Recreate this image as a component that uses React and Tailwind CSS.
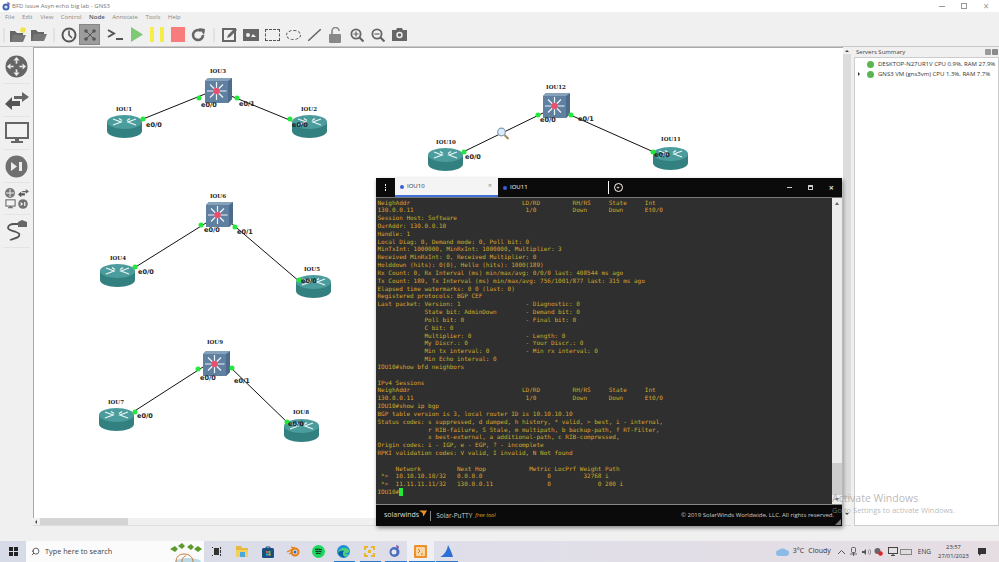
import React from "react";
import { Search } from "lucide-react";

const sans = "font-['Open_Sans','Noto_Sans',sans-serif]";

const termLines = [
  "NeighAddr                               LD/RD         RH/RS     State     Int",
  "130.0.0.11                               1/0          Down      Down      Et0/0",
  "Session Host: Software",
  "OurAddr: 130.0.0.10",
  "Handle: 1",
  "Local Diag: 0, Demand mode: 0, Poll bit: 0",
  "MinTxInt: 1000000, MinRxInt: 1000000, Multiplier: 3",
  "Received MinRxInt: 0, Received Multiplier: 0",
  "Holddown (hits): 0(0), Hello (hits): 1000(189)",
  "Rx Count: 0, Rx Interval (ms) min/max/avg: 0/0/0 last: 408544 ms ago",
  "Tx Count: 189, Tx Interval (ms) min/max/avg: 756/1001/877 last: 315 ms ago",
  "Elapsed time watermarks: 0 0 (last: 0)",
  "Registered protocols: BGP CEF",
  "Last packet: Version: 1                  - Diagnostic: 0",
  "             State bit: AdminDown        - Demand bit: 0",
  "             Poll bit: 0                 - Final bit: 0",
  "             C bit: 0",
  "             Multiplier: 0               - Length: 0",
  "             My Discr.: 0                - Your Discr.: 0",
  "             Min tx interval: 0          - Min rx interval: 0",
  "             Min Echo interval: 0",
  "IOU10#show bfd neighbors",
  " ",
  "IPv4 Sessions",
  "NeighAddr                               LD/RD         RH/RS     State     Int",
  "130.0.0.11                               1/0          Down      Down      Et0/0",
  "IOU10#show ip bgp",
  "BGP table version is 3, local router ID is 10.10.10.10",
  "Status codes: s suppressed, d damped, h history, * valid, > best, i - internal,",
  "              r RIB-failure, S Stale, m multipath, b backup-path, f RT-Filter,",
  "              x best-external, a additional-path, c RIB-compressed,",
  "Origin codes: i - IGP, e - EGP, ? - incomplete",
  "RPKI validation codes: V valid, I invalid, N Not found",
  " ",
  "     Network          Next Hop            Metric LocPrf Weight Path",
  " *>  10.10.10.10/32   0.0.0.0                  0         32768 i",
  " *>  11.11.11.11/32   130.0.0.11               0             0 200 i",
];

const routers = [
  { name: "IOU1", x: 107, y: 114, lx: 124, ly: 105 },
  { name: "IOU2", x: 292, y: 114, lx: 309, ly: 105 },
  { name: "IOU4", x: 100, y: 263, lx: 118, ly: 254 },
  { name: "IOU5", x: 296, y: 274, lx: 312, ly: 265 },
  { name: "IOU7", x: 99, y: 407, lx: 116, ly: 398 },
  { name: "IOU8", x: 284, y: 418, lx: 301, ly: 408 },
  { name: "IOU10", x: 428, y: 147, lx: 446, ly: 138 },
  { name: "IOU11", x: 653, y: 146, lx: 671, ly: 135 },
];

const switches = [
  { name: "IOU3", x: 205, y: 77, lx: 218, ly: 67 },
  { name: "IOU6", x: 206, y: 201, lx: 218, ly: 192 },
  { name: "IOU9", x: 203, y: 350, lx: 215, ly: 338 },
  { name: "IOU12", x: 543, y: 92, lx: 556, ly: 83 },
];

// x1,y1 x2,y2 are the line, dots sit near the ends
const links = [
  [143, 118, 205, 93, 143, 118, 199, 97],
  [231, 95, 292, 120, 237, 97, 290, 118],
  [206, 222, 134, 267, 201, 224, 135, 266],
  [231, 222, 300, 281, 235, 226, 299, 279],
  [203, 366, 133, 411, 198, 368, 135, 411],
  [228, 364, 289, 423, 232, 367, 287, 421],
  [543, 112, 463, 151, 538, 114, 464, 151],
  [566, 112, 656, 152, 571, 114, 653, 151],
];

const ifLabels = [
  { t: "e0/0", x: 146, y: 120 },
  { t: "e0/0", x: 201, y: 100 },
  { t: "e0/1", x: 239, y: 99 },
  { t: "e0/0", x: 292, y: 120 },
  { t: "e0/0", x: 204, y: 225 },
  { t: "e0/1", x: 237, y: 227 },
  { t: "e0/0", x: 138, y: 267 },
  { t: "e0/0", x: 301, y: 276 },
  { t: "e0/0", x: 200, y: 373 },
  { t: "e0/1", x: 234, y: 376 },
  { t: "e0/0", x: 137, y: 411 },
  { t: "e0/0", x: 288, y: 419 },
  { t: "e0/0", x: 540, y: 115 },
  { t: "e0/1", x: 578, y: 114 },
  { t: "e0/0", x: 465, y: 152 },
  { t: "e0/0", x: 654, y: 150 },
];

const Router = () => (
  <svg width="35" height="23" viewBox="0 0 35 23">
    <path d="M0 7v9c0 4 8 7 17.5 7S35 20 35 16V7z" fill="#32807f" />
    <ellipse cx="17.5" cy="7" rx="17.5" ry="7" fill="#4b9c9c" />
    <path d="M6 4l8 3-8 3M29 4l-8 3 8 3M12 3.5l3 2M23 3.5l-3 2" stroke="#e8f4f4" strokeWidth="1.3" fill="none" />
  </svg>
);

const Switch = () => (
  <svg width="27" height="25" viewBox="0 0 27 25">
    <path d="M0 3L3 0h24v21l-4 4H0z" fill="#5f80a0" />
    <path d="M23 3L27 0v21l-4 4z" fill="#4d6c8b" />
    <path d="M0 3L3 0h24l-4 3z" fill="#86a2bb" />
    <path d="M11.500 13H2M11.500 13h10M11.500 13V4M11.500 13v9M11.500 13L5 6.500M11.500 13l6.500-6.500M11.500 13L5 19.500M11.500 13l6.500 6.500" stroke="#eef4f8" strokeWidth="1.200" />
    <circle cx="11.500" cy="13" r="3.300" fill="#e8506e" />
  </svg>
);

const Canvas = () => (
  <div className="relative flex-1 bg-white border-l border-t border-[#a8a8a8] overflow-hidden">
    <svg className="absolute left-[-34px] top-[-47px]" width="999" height="562">
      {links.map((l, i) => (
        <line key={i} x1={l[0]} y1={l[1]} x2={l[2]} y2={l[3]} stroke="#111" strokeWidth="1" />
      ))}
    </svg>
    {routers.map((r) => (
      <div key={r.name} className="absolute" style={{ left: r.x - 34, top: r.y - 47 }}>
        <Router />
      </div>
    ))}
    {switches.map((r) => (
      <div key={r.name} className="absolute" style={{ left: r.x - 34, top: r.y - 47 }}>
        <Switch />
      </div>
    ))}
    <svg className="absolute left-[-34px] top-[-47px]" width="999" height="562">
      {links.map((l, i) => (
        <g key={i}>
          <circle cx={l[4]} cy={l[5]} r="2.500" fill="#22e83a" />
          <circle cx={l[6]} cy={l[7]} r="2.500" fill="#22e83a" />
        </g>
      ))}
      {/* magnifier cursor */}
      <circle cx="501.500" cy="131" r="3.800" fill="#dcecf8" stroke="#7d9ab8" strokeWidth="1.200" />
      <path d="M504.500 134l4 4" stroke="#a08a5a" strokeWidth="2" />
    </svg>
    {[...routers, ...switches].map((r) => (
      <span
        key={r.name}
        className="absolute -translate-x-1/2 font-['DejaVu_Serif',serif] font-bold text-[5.5px] leading-[7px] text-[#222] whitespace-pre"
        style={{ left: r.lx - 34, top: r.ly - 47 }}
      >
        {r.name}
      </span>
    ))}
    {ifLabels.map((l, i) => (
      <span
        key={i}
        className="absolute font-['DejaVu_Sans',sans-serif] font-bold text-[6.500px] leading-[8px] text-[#222] whitespace-pre"
        style={{ left: l.x - 34, top: l.y - 47 }}
      >
        {l.t}
      </span>
    ))}
  </div>
);

const Grip = () => <div className="w-[2px] h-[14px] bg-[#e2e2e2]" />;

const ToolIcons = () => (
  <div className="flex items-center h-full">
    <div className="ml-[3px] mr-[4px]">
      <Grip />
    </div>
    {/* new project */}
    <svg width="18" height="16" viewBox="0 0 18 16">
      <path d="M1 4h5l2 2h6v2H5L3 15H1z" fill="#666" />
      <path d="M4 8h13l-3 7H2z" fill="#777" />
      <circle cx="14" cy="3" r="2.800" fill="#f3e24b" />
    </svg>
    {/* open */}
    <svg className="ml-[4px]" width="16" height="14" viewBox="0 0 16 14">
      <path d="M0 2h5l2 2h6v2H4L2 13H0z" fill="#666" />
      <path d="M3 6h13l-3 7H1z" fill="#777" />
    </svg>
    <div className="w-[14px] flex justify-center">
      <Grip />
    </div>
    {/* clock */}
    <svg width="16" height="16" viewBox="0 0 16 16">
      <circle cx="8" cy="8" r="6.500" fill="none" stroke="#555" strokeWidth="2" />
      <path d="M8 3.500V8l3 3" fill="none" stroke="#555" strokeWidth="1.600" />
    </svg>
    {/* selected device names */}
    <div className="ml-[2px] w-[21px] h-[21px] bg-[#9c9c9c] border border-[#888] flex items-center justify-center">
      <svg width="14" height="14" viewBox="0 0 14 14">
        <path d="M3 3l8 8M11 3l-8 8" stroke="#555" strokeWidth="1" />
        <circle cx="3" cy="3" r="1.800" fill="#555" />
        <circle cx="11" cy="3" r="1.800" fill="#555" />
        <circle cx="3" cy="11" r="1.800" fill="#555" />
        <circle cx="11" cy="11" r="1.800" fill="#555" />
      </svg>
    </div>
    {/* console */}
    <svg className="ml-[7px]" width="16" height="12" viewBox="0 0 16 12">
      <path d="M1 1l6 3.500L1 8" fill="none" stroke="#555" strokeWidth="2" />
      <path d="M9 10h7" stroke="#555" strokeWidth="2" />
    </svg>
    {/* play */}
    <svg className="ml-[8px]" width="12" height="15" viewBox="0 0 12 15">
      <path d="M0 0l12 7.500L0 15z" fill="#7fc876" />
    </svg>
    {/* pause */}
    <div className="ml-[7px] flex gap-[6px] h-[15px]">
      <div className="w-[4px] bg-[#f5ee4a]" />
      <div className="w-[4px] bg-[#f5ee4a]" />
    </div>
    {/* stop */}
    <div className="ml-[7px] w-[14px] h-[15px] bg-[#f97c7c]" />
    {/* reload */}
    <svg className="ml-[5px]" width="16" height="16" viewBox="0 0 16 16">
      <path d="M13 8a5 5 0 1 1-2-4" fill="none" stroke="#666" strokeWidth="2.600" />
      <path d="M9 1l6 1-1 6z" fill="#666" />
    </svg>
    <div className="w-[16px] flex justify-center">
      <Grip />
    </div>
    {/* note */}
    <svg width="16" height="15" viewBox="0 0 16 15">
      <rect x="0" y="1" width="14" height="14" fill="#666" />
      <rect x="2" y="3" width="10" height="10" fill="#f0f0f0" />
      <path d="M5 11l1-3 7-7 2 2-7 7z" fill="#666" />
    </svg>
    {/* image */}
    <svg className="ml-[5px]" width="16" height="12" viewBox="0 0 16 12">
      <rect width="16" height="12" fill="#666" />
      <circle cx="5" cy="6" r="2" fill="#f0f0f0" />
      <path d="M8 8l2-3 3 3z" fill="#f0f0f0" />
    </svg>
    {/* rectangle */}
    <div className="ml-[6px] w-[15px] h-[12px] border-[1.500px] border-dashed border-[#555]" />
    {/* ellipse */}
    <div className="ml-[6px] w-[15px] h-[10px] rounded-[50%] border border-dashed border-[#555]" />
    {/* line */}
    <svg className="ml-[7px]" width="13" height="12" viewBox="0 0 13 12">
      <path d="M0 12L13 0" stroke="#666" strokeWidth="1.500" />
    </svg>
    {/* lock */}
    <svg className="ml-[8px]" width="14" height="16" viewBox="0 0 14 16">
      <path d="M3 7V4a3.500 3.500 0 0 1 7 0" fill="none" stroke="#888" strokeWidth="1.600" />
      <rect x="0" y="7" width="12" height="9" rx="1" fill="#888" />
    </svg>
    {/* zoom in */}
    <svg className="ml-[7px]" width="14" height="14" viewBox="0 0 14 14">
      <circle cx="6" cy="6" r="4.600" fill="none" stroke="#666" strokeWidth="1.800" />
      <path d="M9.500 9.500L13.500 13.500" stroke="#666" strokeWidth="2.200" />
      <path d="M3.500 6h5M6 3.500v5" stroke="#666" strokeWidth="1.200" />
    </svg>
    {/* zoom out */}
    <svg className="ml-[7px]" width="14" height="14" viewBox="0 0 14 14">
      <circle cx="6" cy="6" r="4.600" fill="none" stroke="#666" strokeWidth="1.800" />
      <path d="M9.500 9.500L13.500 13.500" stroke="#666" strokeWidth="2.200" />
      <path d="M3.500 6h5" stroke="#666" strokeWidth="1.200" />
    </svg>
    {/* camera */}
    <svg className="ml-[7px]" width="15" height="13" viewBox="0 0 15 13">
      <path d="M0 2h4l1-2h5l1 2h4v11H0z" fill="#666" />
      <circle cx="7.500" cy="7" r="3.200" fill="#f0f0f0" />
      <circle cx="7.500" cy="7" r="1.800" fill="#666" />
    </svg>
  </div>
);

const Dock = () => (
  <div className="w-[33px] flex flex-col items-center shrink-0">
    <div className="h-[37px] pt-[3px] w-[27px] flex items-center justify-center border-b border-[#e4e4e4]">
      <svg width="23" height="23" viewBox="0 0 23 23">
        <circle cx="11.500" cy="11.500" r="11" fill="#666" />
        <path d="M11.500 2l3 3.500h-6zM11.500 21l3-3.500h-6zM2 11.500l3.500-3v6zM21 11.500l-3.500-3v6z" fill="#eee" />
        <path d="M10.700 5.500h1.600v12h-1.600zM5.500 10.700h12v1.600h-12z" fill="#eee" />
        <circle cx="11.500" cy="11.500" r="3" fill="#666" />
      </svg>
    </div>
    <div className="h-[33px] w-[27px] flex items-center justify-center border-b border-[#e4e4e4]">
      <svg width="24" height="19" viewBox="0 0 24 19">
        <path d="M9 5h8V1l7 5-7 5V8H9z" fill="#666" />
        <path d="M15 10H7V6L0 13l7 6v-4h8z" fill="#555" />
      </svg>
    </div>
    <div className="h-[33px] w-[27px] flex items-center justify-center border-b border-[#e4e4e4]">
      <svg width="24" height="24" viewBox="0 0 24 24">
        <rect x="1" y="2" width="22" height="15" fill="#f3f3f3" stroke="#666" strokeWidth="2" />
        <path d="M10 17h4v3h4v2H6v-2h4z" fill="#666" />
      </svg>
    </div>
    <div className="h-[33px] w-[27px] flex items-center justify-center border-b border-[#e4e4e4]">
      <svg width="23" height="23" viewBox="0 0 23 23">
        <circle cx="11.500" cy="11.500" r="11" fill="#707070" />
        <path d="M6 7l6 4.500L6 16z" fill="#eee" />
        <rect x="14" y="7" width="3" height="9" fill="#eee" />
      </svg>
    </div>
    <div className="h-[32px] w-[27px] flex items-center justify-center border-b border-[#e4e4e4]">
      <div className="grid grid-cols-2 gap-x-[2px] gap-y-[1px]">
        <svg width="10" height="10" viewBox="0 0 10 10">
          <circle cx="5" cy="5" r="5" fill="#777" />
          <path d="M5 1v8M1 5h8" stroke="#eee" strokeWidth="1" />
        </svg>
        <svg width="11" height="10" viewBox="0 0 24 19">
          <path d="M9 5h8V1l7 5-7 5V8H9z" fill="#666" />
          <path d="M15 10H7V6L0 13l7 6v-4h8z" fill="#555" />
        </svg>
        <svg width="11" height="10" viewBox="0 0 24 24">
          <rect x="1" y="2" width="22" height="15" fill="#f3f3f3" stroke="#666" strokeWidth="2.500" />
          <path d="M10 17h4v3h4v2H6v-2h4z" fill="#666" />
        </svg>
        <svg width="10" height="10" viewBox="0 0 23 23">
          <circle cx="11.500" cy="11.500" r="11" fill="#707070" />
          <path d="M6 7l6 4.500L6 16z" fill="#eee" />
          <rect x="14" y="7" width="3" height="9" fill="#eee" />
        </svg>
      </div>
    </div>
    <div className="h-[33px] w-[27px] flex items-center justify-center border-b border-[#e4e4e4]">
      <svg width="23" height="22" viewBox="0 0 23 22">
        <path d="M15 4H9C5 4 3 6 3 8s5 3 8 4 4 2 3 4-6 3-9 4" fill="none" stroke="#555" strokeWidth="1.800" />
        <path d="M13 2l4-2 5 2v5h-9z" fill="#666" />
      </svg>
    </div>
  </div>
);

const Terminal = () => (
  <div className="absolute left-[376px] top-[178px] w-[466px] h-[348px] flex flex-col bg-black shadow-[1px_2px_4px_rgba(0,0,0,0.45)]">
    {/* tabs */}
    <div className="h-[19px] flex items-stretch bg-[#0b0b0b] text-[6px] shrink-0">
      <div className="w-[19px] flex flex-col items-center justify-center gap-[1px]">
        <div className="w-[1.500px] h-[1.500px] bg-white" />
        <div className="w-[1.500px] h-[1.500px] bg-white" />
        <div className="w-[1.500px] h-[1.500px] bg-white" />
      </div>
      <div className={`w-[103px] bg-[#f4f4f4] border-b-2 border-[#3f6fd8] flex items-center pl-[5px] text-[#333] ${sans}`}>
        <div className="w-[4px] h-[4px] rounded-full bg-[#3a5fd8] mr-[3px]" />
        IOU10
        <span className="ml-auto mr-[6px] text-[#888] text-[7px]">×</span>
      </div>
      <div className={`flex items-center pl-[5px] text-white ${sans}`}>
        <div className="w-[4px] h-[4px] rounded-full bg-[#3a5fd8] mr-[3px]" />
        IOU11
      </div>
      <div className="ml-[80px] my-[3px] w-px bg-white" />
      <div className="ml-[5px] self-center w-[9px] h-[9px] rounded-full border border-white flex items-center justify-center text-white text-[6px] leading-none">
        +
      </div>
      <div className="ml-auto flex items-center gap-[16px] mr-[8px]">
        <div className="w-[5px] h-[1.500px] bg-[#ccc]" />
        <div className="w-[5px] h-[5px] border border-[#ccc] border-t-2" />
        <span className="text-[#ddd] text-[9px] leading-none font-bold">×</span>
      </div>
    </div>
    {/* screen */}
    <div className="flex-1 flex border-t border-[#777] bg-[#2f2f2f] min-h-0">
      <div className="flex-1 overflow-hidden pl-[1.500px] pt-[0.500px] font-['DejaVu_Sans_Mono',monospace] text-[6px] leading-[7.830px] text-[#d4a72c] whitespace-pre">
        {termLines.map((l, i) => (
          <div key={i} className="h-[7.830px]">
            {l}
          </div>
        ))}
        <div className="h-[7.830px]">
          IOU10#
          <span className="inline-block w-[3.500px] h-[7.500px] align-top bg-[#22e83a]" />
        </div>
      </div>
      {/* scrollbar */}
      <div className="w-[10px] bg-[#ececec] flex flex-col items-center shrink-0">
        <div className="mt-[4px] w-0 h-0 border-x-[2.500px] border-x-transparent border-b-[3px] border-b-[#666]" />
        <div className="mt-auto w-full h-[32px] bg-[#cdcdcd]" />
        <div className="my-[3px] w-0 h-0 border-x-[2.500px] border-x-transparent border-t-[3px] border-t-[#666]" />
      </div>
    </div>
    {/* footer */}
    <div className="relative h-[22px] bg-[#0a0a0a] border-t border-[#888] flex items-center shrink-0 text-[6.500px]">
      <span className={`ml-[8px] text-[#ddd] text-[7px] ${sans}`}>solarwinds</span>
      <svg className="mb-[5px]" width="8" height="7" viewBox="0 0 9 7">
        <path d="M0 0h9L5 7 4 3z" fill="#f0932b" />
      </svg>
      <div className="ml-[3px] w-px h-[10px] bg-[#888]" />
      <span className={`ml-[5px] text-[#ccc] ${sans}`}>Solar-PuTTY</span>
      <span className={`ml-[3px] italic text-[#e0a020] text-[5.500px] ${sans}`}>free tool</span>
      <span className={`ml-auto mr-[8px] text-[#ccc] text-[6px] ${sans}`}>
        © 2019 SolarWinds Worldwide, LLC. All rights reserved.
      </span>
      <svg className="absolute right-[1px] bottom-[1px]" width="6" height="6" viewBox="0 0 6 6">
        <path d="M6 0v6H0z" fill="#777" />
      </svg>
    </div>
  </div>
);

const Taskbar = () => (
  <div className="h-[21px] shrink-0 flex items-center bg-gradient-to-r from-[#d6dbe7] via-[#e0dfe9] to-[#e6dde3]">
    <div className="w-[26px] flex justify-center">
      <svg width="9" height="9" viewBox="0 0 9 9">
        <path d="M0 0h4v4H0zM5 0h4v4H5zM0 5h4v4H0zM5 5h4v4H5z" fill="#222" />
      </svg>
    </div>
    <div className="relative w-[178px] h-full bg-[#fbfbfb] flex items-center overflow-hidden">
      <Search size={9} className="ml-[5px] text-[#333] -scale-x-100" />
      <span className={`ml-[5px] text-[7.300px] text-[#444] ${sans}`}>Type here to search</span>
      <svg className="absolute right-0 bottom-0" width="40" height="21" viewBox="0 0 40 21">
        <ellipse cx="24" cy="21" rx="13" ry="4" fill="#bcd9e6" />
        <path d="M12 21c0-5 3-8 8-8s9 3 9 8M18 21c0-4 2-6 4-6" fill="none" stroke="#c97a3a" strokeWidth="1" />
        <path d="M6 8l5-3 3 3-3 3zM14 5l4-3 3 3-3 3zM23 6l4-3 3 3-3 3zM30 8l4-3 4 3-4 3z" fill="#5c9a2e" />
      </svg>
    </div>
    <div className="relative flex items-center h-full">
      <div className="w-[25px] flex justify-center">
        <svg width="9" height="9" viewBox="0 0 9 9">
          <path d="M0 0h1v1H0zM0 8h1v1H0zM2 1h5v7H2z M8 0h1v2H8zM8 3h1v3H8zM8 7h1v2H8z" fill="#333" />
        </svg>
      </div>
      <div className="w-[26px] flex justify-center">
        <svg width="12" height="11" viewBox="0 0 12 11">
          <path d="M0 0h5l1 2h6v2H0z" fill="#e8b93c" />
          <path d="M0 4h12v7H0z" fill="#f4cf5a" />
          <path d="M4 6h5v5H4z" fill="#4aa8e0" />
        </svg>
      </div>
      <div className="w-[26px] flex justify-center">
        <svg width="12" height="12" viewBox="0 0 12 12">
          <rect x="0" y="2" width="12" height="10" rx="1.500" fill="#1a4f80" />
          <path d="M4 3V1h4v2" fill="none" stroke="#1a4f80" />
          <path d="M4 5h2v2H4z" fill="#e8553a" />
          <path d="M6.500 5h2v2h-2z" fill="#6cbd45" />
          <path d="M4 7.500h2v2H4z" fill="#2aa4e8" />
          <path d="M6.500 7.500h2v2h-2z" fill="#f4c030" />
        </svg>
      </div>
      <div className="w-[25px] flex justify-center">
        <svg width="13" height="11" viewBox="0 0 13 11">
          <circle cx="8" cy="6" r="3.500" fill="none" stroke="#e87d0d" strokeWidth="2" />
          <circle cx="8" cy="6" r="1.500" fill="#2a6fb0" />
          <path d="M0 6l6-3M2 8l4-2M4 1l4 1" stroke="#e87d0d" strokeWidth="1.200" />
        </svg>
      </div>
      <div className="w-[25px] flex justify-center">
        <svg width="13" height="13" viewBox="0 0 13 13">
          <circle cx="6.500" cy="6.500" r="6.500" fill="#1ed760" />
          <path d="M3 4.500c2-.6 5-.5 7 .6M3.500 6.500c2-.5 4-.4 6 .5M4 8.500c1.500-.4 3-.3 4.500.4" stroke="#111" strokeWidth="1" fill="none" />
        </svg>
      </div>
      <div className="w-[25px] flex justify-center">
        <svg width="13" height="13" viewBox="0 0 13 13">
          <circle cx="6.500" cy="6.500" r="6.500" fill="#1b8fd6" />
          <path d="M1 8c1-5 7-7 11-3 1 3-2 3-4 3 0 1 2 2 4 1-2 4-8 4-11-1z" fill="#4ed07e" />
          <path d="M1 8c1 3 5 5 8 4-3 0-4-4-2-6-2-1-5 0-6 2z" fill="#0d5fa8" />
        </svg>
      </div>
      <div className="w-[26px] flex justify-center">
        <svg width="13" height="13" viewBox="0 0 13 13">
          <path d="M1 1h4v2H3v2H1zM8 1h4v4h-2V3H8zM1 8h2v2h2v2H1zM8 12v-2h2V8h2v4zM5 5h3v3H5z" fill="#eeb42c" />
        </svg>
      </div>
      <div className="w-[25px] flex justify-center">
        <svg width="11" height="13" viewBox="0 0 11 13">
          <circle cx="5.500" cy="7" r="5" fill="#4a6dc0" />
          <circle cx="5" cy="7" r="2.500" fill="#e8e8ef" />
          <path d="M7 0c2 0 3 1 3 3L8 4z" fill="#8a5fb0" />
        </svg>
      </div>
      <div className="w-[27px] h-full bg-[#eef0f6] flex justify-center items-center">
        <svg width="13" height="13" viewBox="0 0 13 13">
          <rect width="13" height="13" rx="1" fill="#f0902a" />
          <rect x="2" y="2" width="9" height="9" rx="1" fill="#f7d6a8" />
          <path d="M4 4l2 2-2 2M7 9h2" stroke="#e07818" fill="none" />
        </svg>
      </div>
      <div className="w-[25px] flex justify-center">
        <svg width="13" height="13" viewBox="0 0 13 13">
          <path d="M0 12C4 10 7 6 8 0c2 4 4 8 5 12z" fill="#2b70d6" />
        </svg>
      </div>
      {/* running-app underlines */}
      <div className="absolute left-[130px] bottom-0 w-[21px] h-[1.500px] bg-[#2a78c8]" />
      <div className="absolute left-[156px] bottom-0 w-[21px] h-[1.500px] bg-[#2a78c8]" />
      <div className="absolute left-[181px] bottom-0 w-[22px] h-[1.500px] bg-[#2a78c8]" />
      <div className="absolute left-[205px] bottom-0 w-[26px] h-[1.500px] bg-[#2a78c8]" />
      <div className="absolute left-[232px] bottom-0 w-[22px] h-[1.500px] bg-[#2a78c8]" />
    </div>
    <div className={`ml-auto flex items-center text-[#333] ${sans}`}>
      <svg width="13" height="8" viewBox="0 0 13 8">
        <path d="M3 8a3 3 0 0 1 0-6c1-2 6-2 7 0a3 3 0 0 1 0 6z" fill="#8cbbe8" />
      </svg>
      <span className="ml-[4px] text-[7px]">3°C</span>
      <span className="ml-[4px] text-[7px]">Cloudy</span>
      <svg className="ml-[7.500px]" width="7" height="4" viewBox="0 0 7 4">
        <path d="M0 4l3.500-3.500L7 4" fill="none" stroke="#333" strokeWidth="0.800" />
      </svg>
      <svg className="ml-[5px]" width="7" height="9" viewBox="0 0 7 9">
        <rect x="1.500" y="0.500" width="4" height="5" rx="1" fill="none" stroke="#444" strokeWidth="0.800" />
        <path d="M0 7h7M3.500 5.500V9" stroke="#444" strokeWidth="0.800" />
      </svg>
      <svg className="ml-[5px]" width="9" height="8" viewBox="0 0 9 8">
        <path d="M0 3h2l2-2v6L2 5H0z" fill="#555" />
        <path d="M6 2c1 1 1 3 0 4M7.500 1c1.500 1.500 1.500 4.500 0 6" stroke="#777" fill="none" strokeWidth="0.700" />
      </svg>
      <svg className="ml-[3px]" width="9" height="9" viewBox="0 0 9 9">
        <circle cx="3.500" cy="4" r="3" fill="#666" />
        <circle cx="6.500" cy="6.500" r="2.300" fill="#e0242c" />
      </svg>
      <svg className="ml-[4.500px]" width="10" height="9" viewBox="0 0 10 9">
        <rect x="0.500" y="0.500" width="9" height="6" fill="none" stroke="#444" />
        <path d="M3 8.500h4M5 6.500v2" stroke="#444" />
      </svg>
      <div className="ml-[2px] w-[12px] h-[6px] border border-[#888] bg-[#ddd]" />
      <span className="ml-[6px] text-[6.500px]">ENG</span>
      <div className="ml-[6px] w-[33px] flex flex-col items-center text-[5.800px] leading-[9px]">
        <span>23:57</span>
        <span>27/01/2023</span>
      </div>
      <svg className="ml-[8px] mr-[13px]" width="8" height="8" viewBox="0 0 8 8">
        <path d="M0 0h8v6H3L1 8V6H0z" fill="#333" />
      </svg>
    </div>
  </div>
);

export default function App() {
  return (
    <div className="relative w-[999px] h-[562px] overflow-hidden flex flex-col bg-[#f0f0f0]">
      {/* title bar */}
      <div className={`h-[12px] shrink-0 bg-white flex items-center text-[6px] text-[#777] ${sans}`}>
        <svg className="ml-[2px] mr-[2px]" width="8" height="9" viewBox="0 0 8 9">
          <circle cx="4" cy="5" r="3.500" fill="#3f63b5" />
          <circle cx="4" cy="5" r="1.600" fill="#dfe4f2" />
          <path d="M5 0c2 0 3 1 3 2.500L6 3z" fill="#8a5fb0" />
        </svg>
        BFD issue Asyn echo big lab - GNS3
        <div className="ml-auto mr-[10px] flex items-center gap-[16px] text-[#999]">
          <div className="w-[6px] h-px bg-[#999]" />
          <div className="w-[6px] h-[6px] border border-[#999]" />
          <span className="text-[10px] leading-none">×</span>
        </div>
      </div>
      {/* menu */}
      <div className={`h-[11px] shrink-0 flex items-center text-[6px] text-[#8a8a8a] pl-[5px] gap-[7.500px] ${sans}`}>
        <span>File</span>
        <span>Edit</span>
        <span>View</span>
        <span>Control</span>
        <span className="font-semibold text-[#555]">Node</span>
        <span>Annotate</span>
        <span>Tools</span>
        <span>Help</span>
      </div>
      {/* toolbar */}
      <div className="h-[24px] shrink-0 border-b border-[#c8c8c8]">
        <ToolIcons />
      </div>
      {/* main */}
      <div className="flex-1 flex min-h-0">
        <Dock />
        <div className="flex-1 flex flex-col min-w-0">
          <div className="flex-1 flex min-h-0">
            <Canvas />
            <div className="w-[8px] bg-[#f0f0f0] flex flex-col items-center shrink-0">
              <div className="w-0 h-0 mt-[3px] border-x-[2px] border-x-transparent border-b-[2px] border-b-[#444]" />
              <div className="w-[8px] mt-[2px] h-[445px] bg-[#dcdcdc]" />
              <div className="mt-auto mb-[3px] w-0 h-0 border-x-[2px] border-x-transparent border-t-[2px] border-t-[#444]" />
            </div>
          </div>
          <div className="h-[8px] shrink-0 bg-[#f0f0f0] border-b border-[#ddd] flex items-center">
            <div className="ml-[2px] w-0 h-0 border-y-[2px] border-y-transparent border-r-[2px] border-r-[#444]" />
            <div className="ml-[3px] w-[88px] h-[7px] bg-[#d4d4d4]" />
          </div>
        </div>
        {/* servers */}
        <div className={`w-[147px] ml-[1px] shrink-0 flex flex-col pl-[2px] text-[#333] whitespace-nowrap ${sans}`}>
          <div className="h-[10px] flex items-center text-[6px] pl-[2px] text-[#444]">
            Servers Summary
            <div className="ml-auto mr-[1px] flex gap-[1px]">
              <div className="w-[6px] h-[6px] rounded-[1px] bg-[#9a9a9a]" />
              <div className="w-[6px] h-[6px] rounded-[1px] bg-[#8a8a8a]" />
            </div>
          </div>
          <div className="flex-1 bg-white border border-[#ccc] pt-[1px] text-[6px] leading-[10px]">
            <div className="flex items-center h-[10px] pl-[12px]">
              <div className="w-[7px] h-[7px] rounded-full bg-[#59b552] mr-[4px]" />
              DESKTOP-N27UR1V CPU 0.9%, RAM 27.9%
            </div>
            <div className="flex items-center h-[10px] pl-[3px]">
              <div className="w-0 h-0 mr-[7px] border-y-[2px] border-y-transparent border-l-[2px] border-l-[#333]" />
              <div className="w-[7px] h-[7px] rounded-full bg-[#59b552] mr-[4px]" />
              GNS3 VM (gns3vm) CPU 1.3%, RAM 7.7%
            </div>
          </div>
        </div>
      </div>
      {/* gap above taskbar */}
      <div className="h-[15px] shrink-0" />
      <Taskbar />
      <Terminal />
      {/* windows watermark */}
      <div className={`absolute left-[832px] top-[491px] text-[#9a9a9a]/70 whitespace-pre ${sans}`}>
        <div className="text-[10.500px] leading-[14px]">Activate Windows</div>
        <div className="text-[7.500px] leading-[10px]">Go to Settings to activate Windows.</div>
      </div>
    </div>
  );
}
